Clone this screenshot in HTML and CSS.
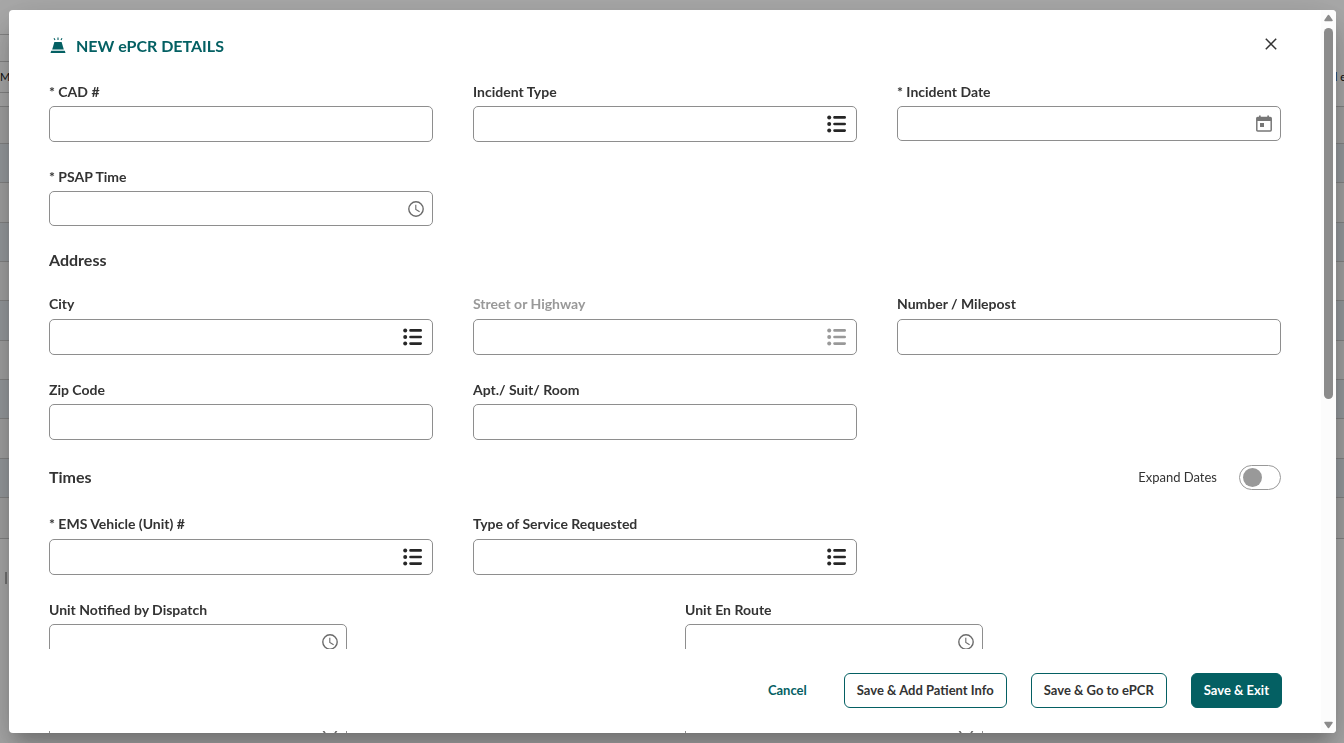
FILE: index.html
```html
<!DOCTYPE html>
<html lang="en">
<head>
<meta charset="utf-8">
<title>New ePCR Details</title>
<link rel="stylesheet" href="styles.css">
</head>
<body>
<svg class="sprite" aria-hidden="true">
  <symbol id="list" viewBox="0 0 20 18">
    <g fill="currentColor"><circle cx="2.2" cy="2.4" r="2"/><circle cx="2.2" cy="9" r="2"/><circle cx="2.2" cy="15.6" r="2"/></g>
    <path d="M7.500 2.400h10.200M7.500 9h10.200M7.500 15.600h10.200" stroke="currentColor" stroke-width="2.6" stroke-linecap="round"/>
  </symbol>
  <symbol id="clock" viewBox="0 0 16 16">
    <circle cx="8" cy="8" r="7.2" fill="none" stroke="currentColor" stroke-width="1.4"/>
    <path d="M7.8 3.8v4.600l3.800 2.400" fill="none" stroke="currentColor" stroke-width="1.1"/>
  </symbol>
</svg>

<div class="backdrop-page" aria-hidden="true">
  <div class="bar bar-top"></div>
  <div class="bar bar-tools"></div>
  <div class="bar bar-head"><span>M</span><span>l e</span></div>
  <div class="bar bar-filter"></div>
  <div class="rows">
    <div class="row"></div><div class="row"></div><div class="row"></div><div class="row"></div>
    <div class="row"></div><div class="row"></div><div class="row"></div><div class="row"></div>
    <div class="row"></div><div class="row"></div><div class="row"></div>
  </div>
  <div class="pager"><i></i></div>
</div>

<div class="overlay">
  <section class="modal" role="dialog" aria-labelledby="title">
    <div class="modal-body">
      <header class="modal-header">
        <svg class="siren" viewBox="0 0 16 18" width="16" height="18">
          <path d="M4.400 4.900h7.200l2.200 7.600H2.200z" fill="currentColor"/>
          <path d="M1.200 13.700h13.600l.7 2.300H.5z" fill="currentColor"/>
          <path d="M8 .6v2.400M4 1.300l1 1.800M12 1.300l-1 1.800" stroke="currentColor" stroke-width="1.1" fill="none"/>
        </svg>
        <h1 id="title">NEW ePCR DETAILS</h1>
        <button class="close" type="button" aria-label="Close">
          <svg viewBox="0 0 12 12" width="12" height="12"><path d="M.8.8l10.400 10.400M11.200.8L.8 11.200" stroke="currentColor" stroke-width="1.5"/></svg>
        </button>
      </header>

      <form class="form" id="epcr">
        <div class="grid">
          <div class="field"><label for="cad">* CAD #</label><div class="control"><input id="cad" type="text"></div></div>
          <div class="field"><label for="itype">Incident Type</label><div class="control"><input id="itype" type="text"><svg class="i-list"><use href="#list"/></svg></div></div>
          <div class="field"><label for="idate">* Incident Date</label><div class="control short"><input id="idate" type="text">
            <svg class="i-cal" viewBox="0 0 16 17"><path d="M1.700 2.500h12.600q.9 0 .9.900v11.600q0 .9-.9.900H1.700q-.9 0-.9-.9V3.400q0-.9.900-.9z" fill="none" stroke="currentColor" stroke-width="1.5"/><path d="M.8 2.500h14.400v3.500H.8zM3 .5h1.700v3H3zM11.300.5H13v3h-1.700zM4 8h4v4H4z" fill="currentColor"/></svg></div></div>
          <div class="field"><label for="psap">* PSAP Time</label><div class="control short"><input id="psap" type="text"><svg class="i-clock"><use href="#clock"/></svg></div></div>
        </div>

        <div class="section"><h2>Address</h2></div>
        <div class="grid">
          <div class="field first"><label for="city">City</label><div class="control"><input id="city" type="text"><svg class="i-list"><use href="#list"/></svg></div></div>
          <div class="field first disabled"><label for="street">Street or Highway</label><div class="control"><input id="street" type="text" disabled><svg class="i-list"><use href="#list"/></svg></div></div>
          <div class="field first"><label for="num">Number / Milepost</label><div class="control"><input id="num" type="text"></div></div>
          <div class="field"><label for="zip">Zip Code</label><div class="control"><input id="zip" type="text"></div></div>
          <div class="field"><label for="apt">Apt./ Suit/ Room</label><div class="control"><input id="apt" type="text"></div></div>
        </div>

        <div class="section times"><h2>Times</h2><label class="switch">Expand Dates<input type="checkbox" role="switch"></label></div>
        <div class="grid">
          <div class="field first"><label for="ems">* EMS Vehicle (Unit) #</label><div class="control"><input id="ems" type="text"><svg class="i-list"><use href="#list"/></svg></div></div>
          <div class="field first"><label for="service">Type of Service Requested</label><div class="control"><input id="service" type="text"><svg class="i-list"><use href="#list"/></svg></div></div>
        </div>
        <div class="grid pairs">
          <div class="field"><label for="notified">Unit Notified by Dispatch</label><div class="control short"><input id="notified" type="text"><svg class="i-clock"><use href="#clock"/></svg></div></div>
          <div class="field"><label for="enroute">Unit En Route</label><div class="control short"><input id="enroute" type="text"><svg class="i-clock"><use href="#clock"/></svg></div></div>
          <div class="field"><span class="spacer"></span><div class="control short"><input aria-label="Time" type="text"><svg class="i-clock"><use href="#clock"/></svg></div></div>
          <div class="field"><span class="spacer"></span><div class="control short"><input aria-label="Time" type="text"><svg class="i-clock"><use href="#clock"/></svg></div></div>
        </div>
      </form>

      <footer class="modal-footer">
        <button class="btn text" type="button">Cancel</button>
        <button class="btn" type="button">Save &amp; Add Patient Info</button>
        <button class="btn" type="button">Save &amp; Go to ePCR</button>
        <button class="btn primary" type="submit" form="epcr">Save &amp; Exit</button>
      </footer>
    </div>
    <div class="scrollbar" aria-hidden="true">
      <svg viewBox="0 0 9 8" width="9" height="8"><path d="M4.500 1.500L8 6.500H1z" fill="currentColor" stroke="currentColor" stroke-width="1.500" stroke-linejoin="round"/></svg>
      <div class="track"><div class="thumb"></div></div>
      <svg viewBox="0 0 9 8" width="9" height="8"><path d="M4.500 6.500L8 1.500H1z" fill="currentColor" stroke="currentColor" stroke-width="1.500" stroke-linejoin="round"/></svg>
    </div>
  </section>
</div>
</body>
</html>
```
FILE: styles.css
```css
* { box-sizing: border-box; }
html, body { height: 100%; }
body { margin: 0; overflow: hidden; background: #fafafa; color: #333; font-family: Lato, "Liberation Sans", sans-serif; }
h1, h2 { margin: 0; font-weight: 700; }
button, input { font: inherit; }
.sprite { display: none; }

.backdrop-page { height: 100%; overflow: hidden; }
.bar { border-bottom: 1px solid #c4c4c4; }
.bar-top { height: 35px; width: 50%; }
.bar-tools { height: 27px; width: 50%; }
.bar-head { height: 31px; display: flex; justify-content: space-between; align-items: center; padding-bottom: 2px; font-size: 11px; color: #111; border-image: linear-gradient(90deg, #c4c4c4 50%, transparent 50%) 1; }
.bar-head span:last-child { margin-right: -2px; }
.bar-filter { height: 14px; }
.row { height: 39px; border-bottom: 1px solid #c4c4c4; background: #f0f0f0; }
.row:nth-child(even) { background: #dfe5ea; }
.row:first-child { height: 37px; }
.row:nth-child(3n) { height: 40px; }
.row:last-child { height: 41px; }
.pager { padding: 33px 5px; }
.pager i { display: block; width: 2px; height: 12px; background: #aaa; }

.overlay { position: fixed; inset: 0; display: flex; padding: 10px 8px 10px 9px; background: rgba(0, 0, 0, .32); }
.modal { display: flex; flex: 1; min-width: 0; overflow: hidden; background: #fff; border-radius: 4px; box-shadow: 0 11px 15px -7px rgba(0, 0, 0, .2), 0 24px 38px 3px rgba(0, 0, 0, .14), 0 9px 46px 8px rgba(0, 0, 0, .12); }
.modal-body { flex: 1; min-width: 0; overflow: hidden; padding: 24px 40px 0; }

.modal-header { display: flex; align-items: center; height: 24px; color: #046063; }
.modal-header h1 { margin-left: 10px; font-size: 16px; line-height: 24px; }
.siren { flex: none; margin-left: 1px; }
.close { align-self: flex-start; margin-left: auto; width: 20px; height: 20px; padding: 4px; border: 0; background: none; color: #333; line-height: 0; }

.form { padding-top: 24px; }
.grid { display: grid; grid-template-columns: repeat(3, minmax(0, 1fr)); column-gap: 40px; row-gap: 25px; }
.pairs { grid-template-columns: repeat(2, minmax(0, 1fr)); margin-top: 25px; row-gap: 27px; }
.pairs .control { width: 50%; }
.field { display: flex; flex-direction: column; gap: 4px; }
.field.first { gap: 5px; }
.field > label, .spacer { height: 20px; font-size: 14px; line-height: 20px; font-weight: 700; }
.control { display: flex; align-items: center; justify-content: flex-end; height: 36px; padding-right: 9px; border: 1px solid #8e8e8e; border-radius: 5px; background: #fff; }
.control.short { height: 35px; padding-right: 8px; }
.control input { flex: 1; min-width: 0; height: 100%; padding: 0 12px; border: 0; outline: 0; background: none; font-size: 14px; }
.control svg { flex: none; }
.i-list { width: 20px; height: 18px; color: #262626; }
.i-clock { width: 16px; height: 16px; color: #6b6b6b; }
.i-cal { width: 16px; height: 17px; color: #777; }
.disabled, .disabled .i-list { color: #999; }

.section { display: flex; align-items: center; justify-content: space-between; height: 68px; }
.section h2 { font-size: 16px; line-height: 20px; }
.section.times { height: 74px; }
.switch { display: flex; align-items: center; gap: 22px; font-size: 13px; }
.switch input { appearance: none; display: flex; align-items: center; width: 42px; height: 25px; margin: 0; padding-left: 3px; border: 1px solid #999; border-radius: 13px; }
.switch input::before { content: ""; width: 19px; height: 19px; border-radius: 50%; background: #999; }

.modal-footer { position: sticky; bottom: 2px; z-index: 1; display: flex; align-items: center; justify-content: flex-end; gap: 24px; height: 82px; margin: 0 -1px; background: #fff; }
.btn { height: 35px; padding: 0 12px; border: 1px solid #046063; border-radius: 6px; background: #fff; color: #333; font-size: 13px; font-weight: 700; }
.btn.text { border-color: transparent; color: #046063; }
.btn.primary { background: #046063; color: #fff; }

.scrollbar { display: flex; flex-direction: column; align-items: center; gap: 6px; width: 15px; padding: 4px 0; background: #fcfcfc; color: #8b8b8b; }
.track { flex: 1; width: 9px; }
.thumb { height: 54%; border-radius: 5px; background: #8b8b8b; }
```
